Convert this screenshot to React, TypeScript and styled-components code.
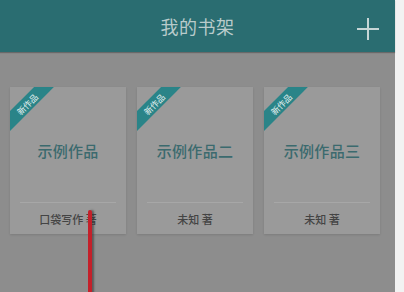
import * as React from 'react';
import styled, { createGlobalStyle } from 'styled-components';

const Global = createGlobalStyle`
  html, body {
    margin: 0;
    padding: 0;
    background: #f4f4f4;
    font-family: "Noto Sans CJK SC", "Noto Sans", sans-serif;
  }
`;

const Page = styled.div`
  position: relative;
  display: flex;
  width: 404px;
  height: 292px;
  overflow: hidden;
`;

const Screen = styled.main`
  width: 395px;
  height: 100%;
  background: #8d8d8d;
  display: flex;
  flex-direction: column;
`;

const Edge = styled.div`
  flex: 1;
  background: #f2f2f2;
`;

const Header = styled.header`
  position: relative;
  height: 52px;
  background: #2a6d71;
  display: flex;
  align-items: center;
  justify-content: center;
  box-shadow: 0 1px 1px rgba(0, 0, 0, 0.25);
`;

const Title = styled.h1`
  margin: 0;
  font-size: 18px;
  font-weight: 400;
  color: #b9cbcb;
  letter-spacing: 0.5px;
`;

const AddButton = styled.button`
  position: absolute;
  right: 16px;
  top: 18px;
  width: 22px;
  height: 22px;
  padding: 0;
  border: 0;
  background: none;
  display: flex;
`;

const Shelf = styled.section`
  display: grid;
  grid-template-columns: repeat(3, 116px);
  column-gap: 11px;
  padding: 35px 0 0 10px;
`;

const Card = styled.div`
  position: relative;
  height: 147px;
  background: #9a9a9a;
  overflow: hidden;
  display: flex;
  flex-direction: column;
  box-shadow: 0 1px 2px rgba(0, 0, 0, 0.12);
`;

const Ribbon = styled.div`
  position: absolute;
  left: -24px;
  top: 10px;
  width: 82px;
  height: 14px;
  background: #2a8488;
  color: #e6f2f2;
  font-size: 8.5px;
  line-height: 14px;
  text-align: center;
  transform: rotate(-45deg);
`;

const CardBody = styled.div`
  height: 115px;
  display: flex;
  align-items: center;
  justify-content: center;
  padding-top: 12px;
  box-sizing: border-box;
`;

const BookName = styled.div`
  font-size: 15px;
  font-weight: 500;
  color: #3b6a6e;
  letter-spacing: 0.3px;
`;

const Divider = styled.div`
  height: 1px;
  margin: 0 10px;
  background: #a7a7a7;
`;

const Author = styled.div`
  flex: 1;
  display: flex;
  align-items: center;
  justify-content: center;
  font-size: 11px;
  font-weight: 500;
  color: #444;
`;

const Marker = styled.div`
  position: absolute;
  left: 88px;
  top: 210px;
  width: 4px;
  height: 90px;
  background: #c4202a;
  border-radius: 2px 2px 0 0;
  box-shadow: 2px 0 2px rgba(50, 50, 50, 0.55);
`;

const books = [
  { name: '示例作品', author: '口袋写作 著' },
  { name: '示例作品二', author: '未知 著' },
  { name: '示例作品三', author: '未知 著' }
];

export default function App() {
  return (
    <Page>
      <Global />
      <Screen>
        <Header>
          <Title>我的书架</Title>
          <AddButton>
            <svg width="22" height="22" viewBox="0 0 22 22">
              <path d="M11 0v22M0 11h22" stroke="#c6d6d6" strokeWidth="2" fill="none" />
            </svg>
          </AddButton>
        </Header>
        <Shelf>
          {books.map(b => (
            <Card key={b.name}>
              <Ribbon>新作品</Ribbon>
              <CardBody>
                <BookName>{b.name}</BookName>
              </CardBody>
              <Divider />
              <Author>{b.author}</Author>
            </Card>
          ))}
        </Shelf>
      </Screen>
      <Edge />
      <Marker />
    </Page>
  );
}
